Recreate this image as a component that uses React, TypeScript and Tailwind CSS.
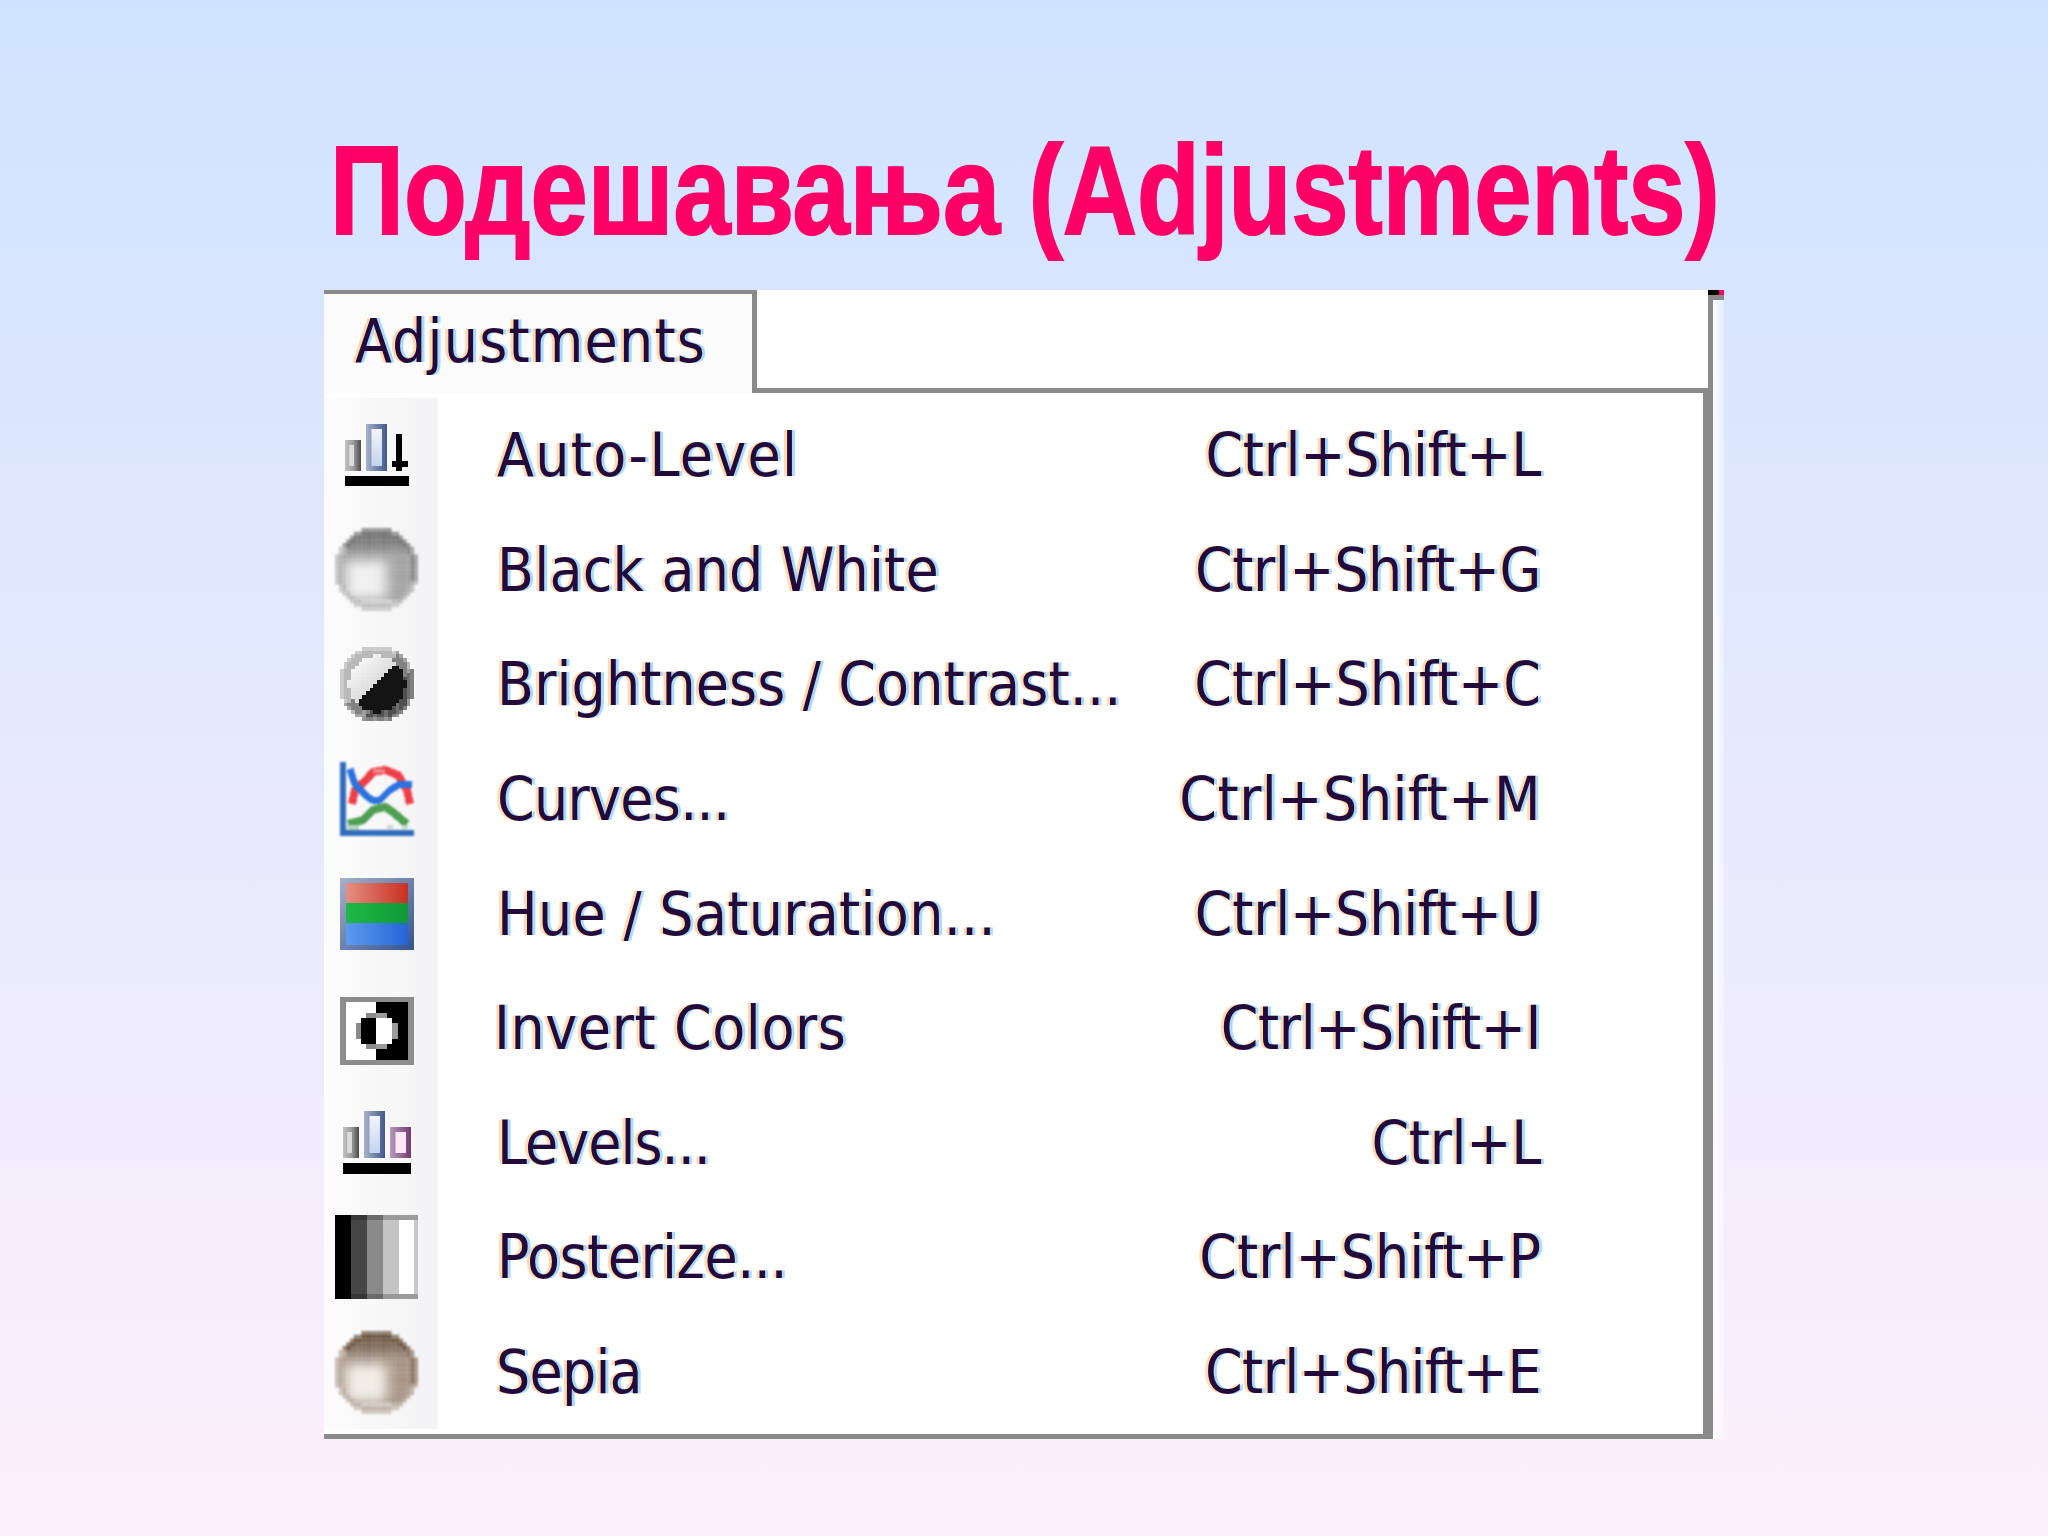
import React from "react";

function Ball({ sepia }: { sepia?: boolean }) {
  const n = 22;
  const cells: React.ReactNode[] = [];
  for (let j = 0; j < n; j++) {
    for (let i = 0; i < n; i++) {
      const x = ((i + 0.5) / n) * 2 - 1;
      const y = ((j + 0.5) / n) * 2 - 1;
      const d = Math.hypot(x, y);
      if (d > 1.02) continue;
      const h = Math.exp(-(((x + 0.25) / 0.55) ** 4 + ((y - 0.25) / 0.5) ** 4));
      let v = 160 + 80 * h;
      if (y < -0.3) v -= 50 * Math.min(1, (-y - 0.3) / 0.5);
      if (d > 0.86) {
        if (y < -0.5) v = sepia ? 100 : 112;
        else if (x > 0.55) v = y > 0.3 ? 170 : 132;
        else v = 176 + 14 * Math.max(0, y);
      }
      if (y > 0.7 && d <= 0.86) v = 208;
      v = Math.max(80, Math.min(245, v));
      const t = (255 - v) / 255;
      const r = sepia ? v + 2 : v;
      const g = sepia ? v - 34 * t - 2 : v;
      const b = sepia ? v - 62 * t - 6 : v;
      cells.push(
        <rect key={`${i}-${j}`} x={i} y={j} width={1} height={1} fill={`rgb(${r | 0},${g | 0},${b | 0})`} opacity={d > 0.95 ? 0.7 : 1} />
      );
    }
  }
  return (
    <svg width={83} height={83} viewBox={`0 0 ${n} ${n}`} className="blur-[1px]">
      {cells}
    </svg>
  );
}

function Contrast() {
  const n = 20;
  const cells: React.ReactNode[] = [];
  for (let j = 0; j < n; j++) {
    for (let i = 0; i < n; i++) {
      const x = ((i + 0.5) / n) * 2 - 1;
      const y = ((j + 0.5) / n) * 2 - 1;
      const d = Math.hypot(x, y);
      if (d > 1.03) continue;
      const s = x + y;
      let v: number;
      if (d > 0.76) {
        v = s < -0.3 ? 185 : s < 0.6 ? 130 : 80;
        if (i % 3 === 0 && s > 0) v += 30;
      } else {
        v = s < -0.05 ? 245 - 25 * Math.max(0, s + 1) : 20;
      }
      cells.push(<rect key={`${i}-${j}`} x={i} y={j} width={1.02} height={1.02} fill={`rgb(${v | 0},${v | 0},${v | 0})`} opacity={d > 0.95 ? 0.7 : 1} />);
    }
  }
  return (
    <svg width={74} height={74} viewBox={`0 0 ${n} ${n}`} shapeRendering="crispEdges" className="blur-[0.5px]">
      {cells}
    </svg>
  );
}

function Bar({ x, y, w, h, id }: { x: number; y: number; w: number; h: number; id: "g" | "b" | "p" }) {
  const outer = id === "g" ? "url(#barG)" : id === "b" ? "url(#barB)" : "url(#barP)";
  const inner = id === "g" ? "#dcdcdc" : id === "b" ? "url(#barI)" : "#fbe6fa";
  const iw = id === "g" ? w * 0.3 : w * 0.5;
  return (
    <g>
      <rect x={x} y={y} width={w} height={h} fill={outer} />
      <rect x={x + w * 0.26} y={y + 5} width={iw} height={h - 10} fill={inner} />
    </g>
  );
}

function BarDefs() {
  return (
    <defs>
      <linearGradient id="barG" x1="0" x2="1" y1="0" y2="0">
        <stop offset="0" stopColor="#c2c2c2" />
        <stop offset="0.55" stopColor="#9a9a9a" />
        <stop offset="1" stopColor="#4a4a4a" />
      </linearGradient>
      <linearGradient id="barB" x1="0" x2="1" y1="0" y2="0">
        <stop offset="0" stopColor="#a7b3c9" />
        <stop offset="1" stopColor="#40598a" />
      </linearGradient>
      <linearGradient id="barP" x1="0" x2="1" y1="0" y2="0">
        <stop offset="0" stopColor="#b79ab8" />
        <stop offset="1" stopColor="#703a6e" />
      </linearGradient>
      <linearGradient id="barI" x1="0" x2="0" y1="0" y2="1">
        <stop offset="0" stopColor="#f2f5fb" />
        <stop offset="1" stopColor="#c4d4ee" />
      </linearGradient>
    </defs>
  );
}

function AutoLevel() {
  return (
    <svg width={64} height={62} viewBox="0 0 64 62" className="blur-[0.4px]">
      <BarDefs />
      <Bar x={0} y={16} w={16} h={31} id="g" />
      <Bar x={21} y={0} w={21} h={47} id="b" />
      <rect x={51} y={10} width={6} height={37} fill="#000" />
      <rect x={47} y={37} width={16} height={6} fill="#000" />
      <rect x={0} y={52} width={64} height={10} fill="#000" />
    </svg>
  );
}

function Levels() {
  return (
    <svg width={68} height={63} viewBox="0 0 68 63" className="blur-[0.4px]">
      <BarDefs />
      <Bar x={0} y={16} w={16} h={31} id="g" />
      <Bar x={21} y={0} w={21} h={47} id="b" />
      <Bar x={47} y={16} w={21} h={31} id="p" />
      <rect x={0} y={52} width={68} height={11} fill="#000" />
    </svg>
  );
}

function Curves() {
  return (
    <svg width={74} height={74} viewBox="0 0 74 74" className="blur-[0.8px]" fill="none" strokeLinejoin="round" shapeRendering="crispEdges">
      <path d="M12 42L15 28L27 17L33 10L45 8L58 13L67 28L70 42" stroke="#ee3f48" strokeWidth={8} />
      <path d="M33 7H45V11H33Z" fill="#f08a8e" />
      <path d="M10 7L15 22L25 33L32 38L40 38L50 28L60 22L72 23" stroke="#2a72e0" strokeWidth={7} />
      <path d="M8 62L23 58L33 48L45 45L53 50L62 58L67 62" stroke="#4f9f52" strokeWidth={8} />
      <rect x={7} y={63} width={12} height={5} fill="#b9d4bd" />
      <rect x={47} y={63} width={6} height={4} fill="#d5d5d5" />
      <rect x={62} y={63} width={6} height={4} fill="#c4d8c6" />
      <rect x={0} y={0} width={5.5} height={74} fill="#2f6cbc" />
      <rect x={0} y={68} width={74} height={6} fill="#2f6cbc" />
    </svg>
  );
}

function Hue() {
  return (
    <svg width={74} height={72} viewBox="0 0 74 72" className="blur-[0.4px]">
      <defs>
        <linearGradient id="hFrame" x1="0" x2="1" y1="0" y2="1">
          <stop offset="0" stopColor="#a4b1c9" />
          <stop offset="1" stopColor="#34548f" />
        </linearGradient>
        <linearGradient id="hR" x1="0" x2="1" y1="0" y2="0">
          <stop offset="0" stopColor="#e38f85" />
          <stop offset="1" stopColor="#c92f1e" />
        </linearGradient>
        <linearGradient id="hG" x1="0" x2="1" y1="0" y2="0">
          <stop offset="0" stopColor="#1fb84a" />
          <stop offset="1" stopColor="#0f9a34" />
        </linearGradient>
        <linearGradient id="hB" x1="0" x2="1" y1="0" y2="0">
          <stop offset="0" stopColor="#5c9bee" />
          <stop offset="1" stopColor="#2465d6" />
        </linearGradient>
      </defs>
      <rect width={74} height={72} fill="url(#hFrame)" />
      <rect x={6} y={5} width={62} height={20} fill="url(#hR)" />
      <rect x={6} y={25} width={62} height={20} fill="url(#hG)" />
      <rect x={6} y={45} width={62} height={22} fill="url(#hB)" />
    </svg>
  );
}

function Invert() {
  return (
    <svg width={74} height={68} viewBox="0 0 74 68" shapeRendering="crispEdges" className="mt-[6px] blur-[0.4px]">
      <rect width={74} height={68} fill="#8c8c8c" />
      <rect x={6} y={5} width={30} height={58} fill="#fff" />
      <rect x={36} y={5} width={32} height={58} fill="#000" />
      <rect x={16} y={26} width={5} height={16} fill="#8a8a8a" />
      <rect x={26} y={16} width={10} height={5} fill="#8a8a8a" />
      <rect x={26} y={47} width={10} height={5} fill="#8a8a8a" />
      <rect x={21} y={21} width={15} height={26} fill="#000" />
      <rect x={36} y={16} width={11} height={5} fill="#9a9a9a" />
      <rect x={36} y={47} width={11} height={5} fill="#9a9a9a" />
      <rect x={52} y={26} width={6} height={16} fill="#9a9a9a" />
      <rect x={36} y={21} width={16} height={26} fill="#fff" />
    </svg>
  );
}

function Posterize() {
  return (
    <svg width={83} height={84} viewBox="0 0 83 84" shapeRendering="crispEdges" className="blur-[0.4px]">
      <rect x={0} y={0} width={16} height={84} fill="#000" />
      <rect x={16} y={0} width={16} height={84} fill="#464646" />
      <rect x={32} y={0} width={16} height={84} fill="#8a8a8a" />
      <rect x={48} y={0} width={16} height={84} fill="#c4c4c4" />
      <rect x={64} y={0} width={19} height={84} fill="#c8c8c8" />
      <rect x={64} y={5} width={15} height={74} fill="#fff" />
      <rect x={16} y={0} width={67} height={5} fill="#000" opacity={0.22} />
      <rect x={16} y={79} width={67} height={5} fill="#000" opacity={0.22} />
    </svg>
  );
}

const rows: { icon: React.ReactNode; label: string; key: string; lt: string; kt: string }[] = [
  { icon: <AutoLevel />, label: "Auto-Level", key: "Ctrl+Shift+L", lt: "tracking-[1.3px] pl-[59px]", kt: "tracking-[-0.3px]" },
  { icon: <Ball />, label: "Black and White", key: "Ctrl+Shift+G", lt: "tracking-[0.2px] pl-[59px]", kt: "tracking-[-0.4px]" },
  { icon: <Contrast />, label: "Brightness / Contrast...", key: "Ctrl+Shift+C", lt: "tracking-[0.1px] pl-[59px]", kt: "tracking-[0px]" },
  { icon: <Curves />, label: "Curves...", key: "Ctrl+Shift+M", lt: "tracking-[-0.7px] pl-[59px]", kt: "tracking-[0.5px]" },
  { icon: <Hue />, label: "Hue / Saturation...", key: "Ctrl+Shift+U", lt: "tracking-[0.3px] pl-[59px]", kt: "tracking-[-0.2px]" },
  { icon: <Invert />, label: "Invert Colors", key: "Ctrl+Shift+I", lt: "tracking-[0.6px] pl-[56px]", kt: "tracking-[-0.4px]" },
  { icon: <Levels />, label: "Levels...", key: "Ctrl+L", lt: "tracking-[-1px] pl-[59px]", kt: "tracking-[-0.3px]" },
  { icon: <Posterize />, label: "Posterize...", key: "Ctrl+Shift+P", lt: "tracking-[-0.5px] pl-[59px]", kt: "tracking-[0px]" },
  { icon: <Ball sepia />, label: "Sepia", key: "Ctrl+Shift+E", lt: "tracking-[-0.8px] pl-[58px]", kt: "tracking-[-0.6px]" },
];

const menuText =
  "font-['DejaVu_Sans','Liberation_Sans',sans-serif] [font-stretch:condensed] text-[60px] leading-none whitespace-nowrap text-[#240a3a] [text-shadow:3px_0_0_rgba(130,205,255,0.7),-3px_0_0_rgba(255,190,110,0.55)]";

export default function App() {
  return (
    <div className="min-h-[1536px] w-full bg-gradient-to-b from-[#cfe3ff] to-[#fdf0fb]">
      <div className="h-[290px] pt-[128px] pl-[330px]">
        <h1 className="inline-block origin-left scale-x-[0.816] font-['Liberation_Sans',Arial,sans-serif] text-[126px] font-bold leading-none whitespace-nowrap text-[#ff0066] [-webkit-text-stroke:2px_#ff0066]">
          Подешавања (Adjustments)
        </h1>
      </div>
      <div className="ml-[324px] flex w-[1400px]">
        <div className="w-[1389px]">
          <div className="flex h-[103px]">
            <div className={`w-[433px] border-t-4 border-r-[5px] border-[#8a8a8a] bg-[#fbfbfb] pl-[31px] pt-[17px] tracking-[1.2px] ${menuText}`}>
              Adjustments
            </div>
            <div className="flex-1 border-r-[5px] border-b-[5px] border-[#8a8a8a] bg-white" />
          </div>
          <div className="border-r-[10px] border-b-[5px] border-[#8a8a8a] bg-white pt-[5px] pb-[5px]">
            {rows.map((r) => (
              <div key={r.label} className="flex h-[114.6px] items-center">
                <div className="flex h-full w-[114px] items-center justify-center bg-gradient-to-r from-[#fcfcfc] to-[#f3f3f5] pr-[9px]">
                  {r.icon}
                </div>
                <div className={`flex-1 ${r.lt} ${menuText}`}>{r.label}</div>
                <div className={`pr-[162px] ${r.kt} ${menuText}`}>{r.key}</div>
              </div>
            ))}
          </div>
        </div>
        <div className="relative w-[11px] bg-gradient-to-r from-white/90 to-white/30">
          <div className="h-[10px] bg-[#8a8a8a]" />
          <div className="absolute top-0 left-[-5px] h-[5px] w-[11px] bg-black" />
          <div className="absolute top-0 left-[6px] h-[5px] w-[5px] bg-[#ff0066]" />
        </div>
      </div>
    </div>
  );
}
